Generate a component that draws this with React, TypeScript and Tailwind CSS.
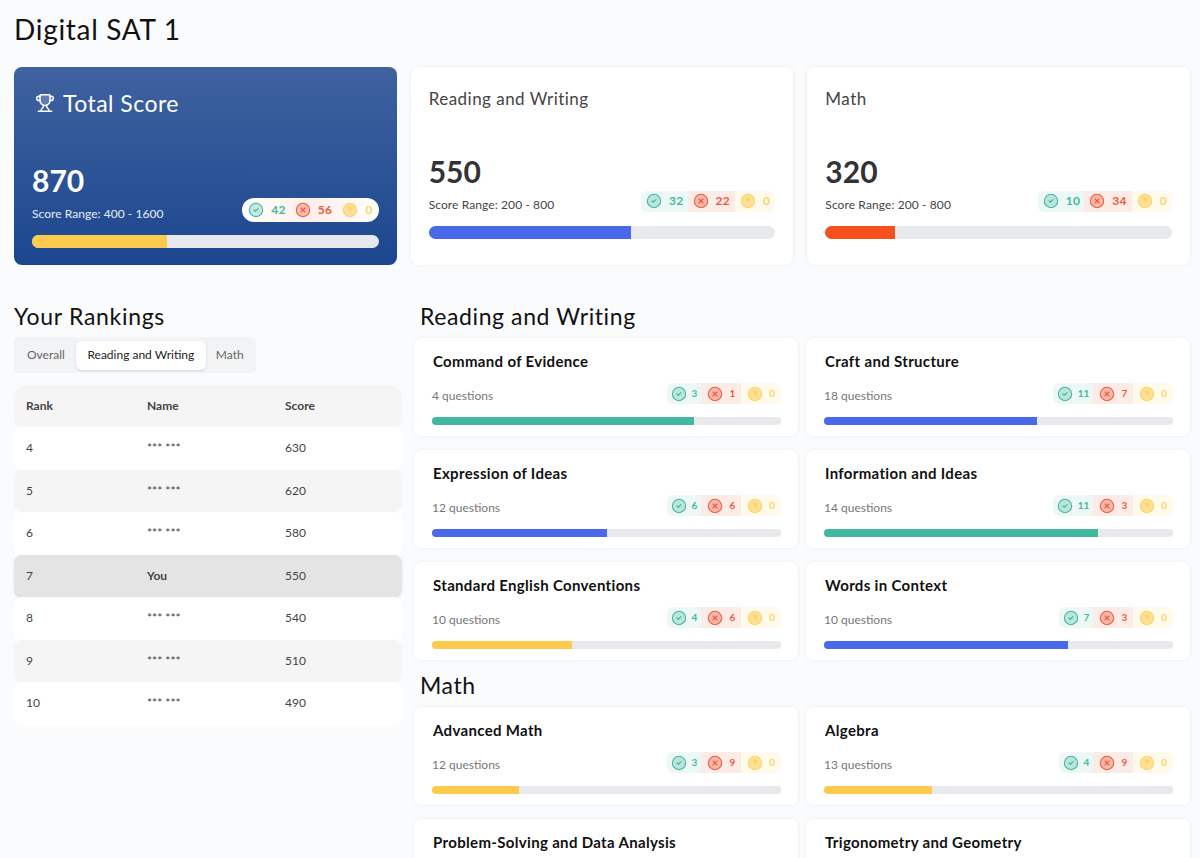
import React from 'react';
import { CircleCheck, CircleX, CircleHelp, Trophy } from 'lucide-react';

type Topic = { name: string; questions: number; right: number; wrong: number; pct: number; color: string };

const TEAL = 'bg-[#41b8a0]';
const BLUE = 'bg-[#4a69ea]';
const YELLOW = 'bg-[#fccb4e]';

const readingTopics: Topic[] = [
  { name: 'Command of Evidence', questions: 4, right: 3, wrong: 1, pct: 75, color: TEAL },
  { name: 'Craft and Structure', questions: 18, right: 11, wrong: 7, pct: 61, color: BLUE },
  { name: 'Expression of Ideas', questions: 12, right: 6, wrong: 6, pct: 50, color: BLUE },
  { name: 'Information and Ideas', questions: 14, right: 11, wrong: 3, pct: 78.6, color: TEAL },
  { name: 'Standard English Conventions', questions: 10, right: 4, wrong: 6, pct: 40, color: YELLOW },
  { name: 'Words in Context', questions: 10, right: 7, wrong: 3, pct: 70, color: BLUE },
];

const mathTopics: Topic[] = [
  { name: 'Advanced Math', questions: 12, right: 3, wrong: 9, pct: 25, color: YELLOW },
  { name: 'Algebra', questions: 13, right: 4, wrong: 9, pct: 31, color: YELLOW },
  { name: 'Problem-Solving and Data Analysis', questions: 10, right: 2, wrong: 8, pct: 20, color: YELLOW },
  { name: 'Trigonometry and Geometry', questions: 9, right: 1, wrong: 8, pct: 11, color: YELLOW },
];

const rankings = [
  { rank: 4, name: '*** ***', score: 630 },
  { rank: 5, name: '*** ***', score: 620 },
  { rank: 6, name: '*** ***', score: 580 },
  { rank: 7, name: 'You', score: 550 },
  { rank: 8, name: '*** ***', score: 540 },
  { rank: 9, name: '*** ***', score: 510 },
  { rank: 10, name: '*** ***', score: 490 },
];

const Stats = ({ right, wrong, large, plain }: { right: number; wrong: number; large?: boolean; plain?: boolean }) => {
  const text = large ? 'h-[21px] text-[12px] tracking-[0.3px]' : 'h-[21px] text-[10px]';
  const first = large ? 'pl-[5px] pr-[4px] gap-[7px]' : 'px-[4px] gap-[5px]';
  const rest = large ? 'px-[5px] gap-[7px]' : 'px-[6px] gap-[6px]';
  return (
    <div className="flex items-center font-bold">
      <div className={`flex items-center rounded-l-md text-[#41b8a0] ${plain ? '' : 'bg-[#edf8f6]'} ${text} ${first}`}>
        <CircleCheck size={16} strokeWidth={1.6} className="fill-[#41b8a0]/30" />
        <span>{right}</span>
      </div>
      <div className={`flex items-center text-[#ef5a3c] ${plain ? '' : 'bg-[#fcece8]'} ${text} ${rest}`}>
        <CircleX size={16} strokeWidth={1.6} className="fill-[#ef5a3c]/35" />
        <span>{wrong}</span>
      </div>
      <div className={`flex items-center rounded-r-md text-[#f8d568] ${plain ? '' : 'bg-[#fffaec]'} ${text} ${rest}`}>
        <CircleHelp size={16} strokeWidth={1.6} className="fill-[#fccb4e]/55" />
        <span>0</span>
      </div>
    </div>
  );
};

const Bar = ({ pct, color, className }: { pct: number; color: string; className: string }) => (
  <div className={`w-full overflow-hidden rounded-full bg-[#e7e9ec] ${className}`}>
    <div className={`h-full ${color}`} style={{ width: `${pct}%` }} />
  </div>
);

const ScoreCard = ({ title, score, right, wrong, pct, color }: { title: string; score: number; right: number; wrong: number; pct: number; color: string }) => (
  <div className="flex h-[198px] flex-col rounded-lg bg-white px-[18px] pt-[21px] shadow-[0_0_4px_rgba(30,50,90,0.06)]">
    <div className="text-[17px] leading-[22px] tracking-[0.47px] text-[#444]">{title}</div>
    <div className="mt-[42px] text-[30px] font-bold leading-[38px] text-[#333]">{score}</div>
    <div className="mt-[3px] flex h-[24px] items-center justify-between">
      <span className="mb-[1px] text-[12px] tracking-[0.1px] text-[#444]">Score Range: 200 - 800</span>
      <div className="mb-[8px]">
        <Stats right={right} wrong={wrong} large />
      </div>
    </div>
    <Bar pct={pct} color={color} className="mt-[9px] h-[13px]" />
  </div>
);

const TopicCard = ({ topic }: { topic: Topic }) => (
  <div className="flex h-[98px] flex-col rounded-lg bg-white pl-[18px] pr-[17px] pt-[13px] shadow-[0_0_4px_rgba(30,50,90,0.06)]">
    <div className="pl-[1px] text-[15px] font-bold leading-[20px] tracking-[0.33px] text-[#111]">{topic.name}</div>
    <div className="mt-[12px] flex h-[21px] items-center justify-between">
      <span className="mt-[4px] text-[12px] text-[#777]">{topic.questions} questions</span>
      <Stats right={topic.right} wrong={topic.wrong} />
    </div>
    <Bar pct={topic.pct} color={topic.color} className="mt-[13px] h-[8px]" />
  </div>
);

const Rankings = () => (
  <div className="w-[388px] shrink-0">
    <h2 className="text-[23px] leading-[30px] tracking-[0.7px] text-[#111]">Your Rankings</h2>
    <div className="mt-[6px] flex h-[36px] w-[242px] items-center rounded bg-[#f2f3f5] pl-[3px] text-[12px] text-[#666]">
      <span className="pl-[10px] pr-[11px]">Overall</span>
      <span className="flex h-[29px] w-[130px] items-center justify-center rounded-md bg-white text-[#222] shadow-sm">Reading and Writing</span>
      <span className="px-[10px]">Math</span>
    </div>
    <div className="mt-[12px] text-[12px] text-[#444]">
      <div className="grid h-[42px] grid-cols-[121px_138px_1fr] items-center rounded-t-xl rounded-b-lg bg-[#f5f5f6] px-[12px] font-bold">
        <span>Rank</span>
        <span>Name</span>
        <span>Score</span>
      </div>
      {rankings.map((row, i) => (
        <div
          key={row.rank}
          className={`grid h-[42.5px] grid-cols-[121px_138px_1fr] items-center rounded-lg px-[12px] ${
            row.name === 'You' ? 'bg-[#e4e4e5] font-bold shadow-sm' : i % 2 === 0 ? 'bg-white' : 'bg-[#f5f5f6]'
          }`}
        >
          <span className="font-normal">{row.rank}</span>
          <span>{row.name}</span>
          <span className="font-normal">{row.score}</span>
        </div>
      ))}
    </div>
  </div>
);

const App = () => {
  return (
    <div className="h-[858px] overflow-hidden bg-[#f9fbfd] pl-[14px] pr-[10px] font-['Lato','Liberation_Sans',sans-serif]">
      <h1 className="pt-[12px] pb-[1px] text-[28px] leading-[34px] tracking-[0.7px] text-[#111]">Digital SAT 1</h1>
      <div className="mt-[20px] grid grid-cols-3 gap-[14px]">
        <div className="flex h-[198px] flex-col rounded-lg bg-gradient-to-b from-[#3f629f] to-[#1b468f] px-[18px] pt-[21px] text-white">
          <div className="flex items-center gap-[8px] pl-[3px] text-[23px] leading-[30px] tracking-[0.45px]">
            <Trophy size={20} strokeWidth={1.75} className="fill-white/20" />
            <span>Total Score</span>
          </div>
          <div className="mt-[43px] text-[30px] font-bold leading-[38px]">870</div>
          <div className="mt-[3px] flex h-[24px] items-center justify-between">
            <span className="text-[12px] tracking-[0.05px] text-white/90">Score Range: 400 - 1600</span>
            <div className="mb-[8px] flex h-[24px] items-center rounded-xl bg-gradient-to-r from-white via-[#fdeee9] to-white px-[1px]">
              <Stats right={42} wrong={56} large plain />
            </div>
          </div>
          <Bar pct={39} color={YELLOW} className="mt-[9px] h-[13px]" />
        </div>
        <ScoreCard title="Reading and Writing" score={550} right={32} wrong={22} pct={58.4} color={BLUE} />
        <ScoreCard title="Math" score={320} right={10} wrong={34} pct={20} color="bg-[#f4511e]" />
      </div>
      <div className="mt-[36px] flex gap-[12px]">
        <Rankings />
        <div className="min-w-0 flex-1">
          <h2 className="pl-[6px] text-[23px] leading-[30px] tracking-[0.6px] text-[#111]">Reading and Writing</h2>
          <div className="mt-[7px] grid grid-cols-2 gap-x-[8px] gap-y-[14px]">
            {readingTopics.map((t) => <TopicCard key={t.name} topic={t} />)}
          </div>
          <h2 className="mt-[10px] pl-[6px] text-[23px] leading-[30px] tracking-[0.6px] text-[#111]">Math</h2>
          <div className="mt-[7px] grid grid-cols-2 gap-x-[8px] gap-y-[14px]">
            {mathTopics.map((t) => <TopicCard key={t.name} topic={t} />)}
          </div>
        </div>
      </div>
    </div>
  );
};

export default App;
